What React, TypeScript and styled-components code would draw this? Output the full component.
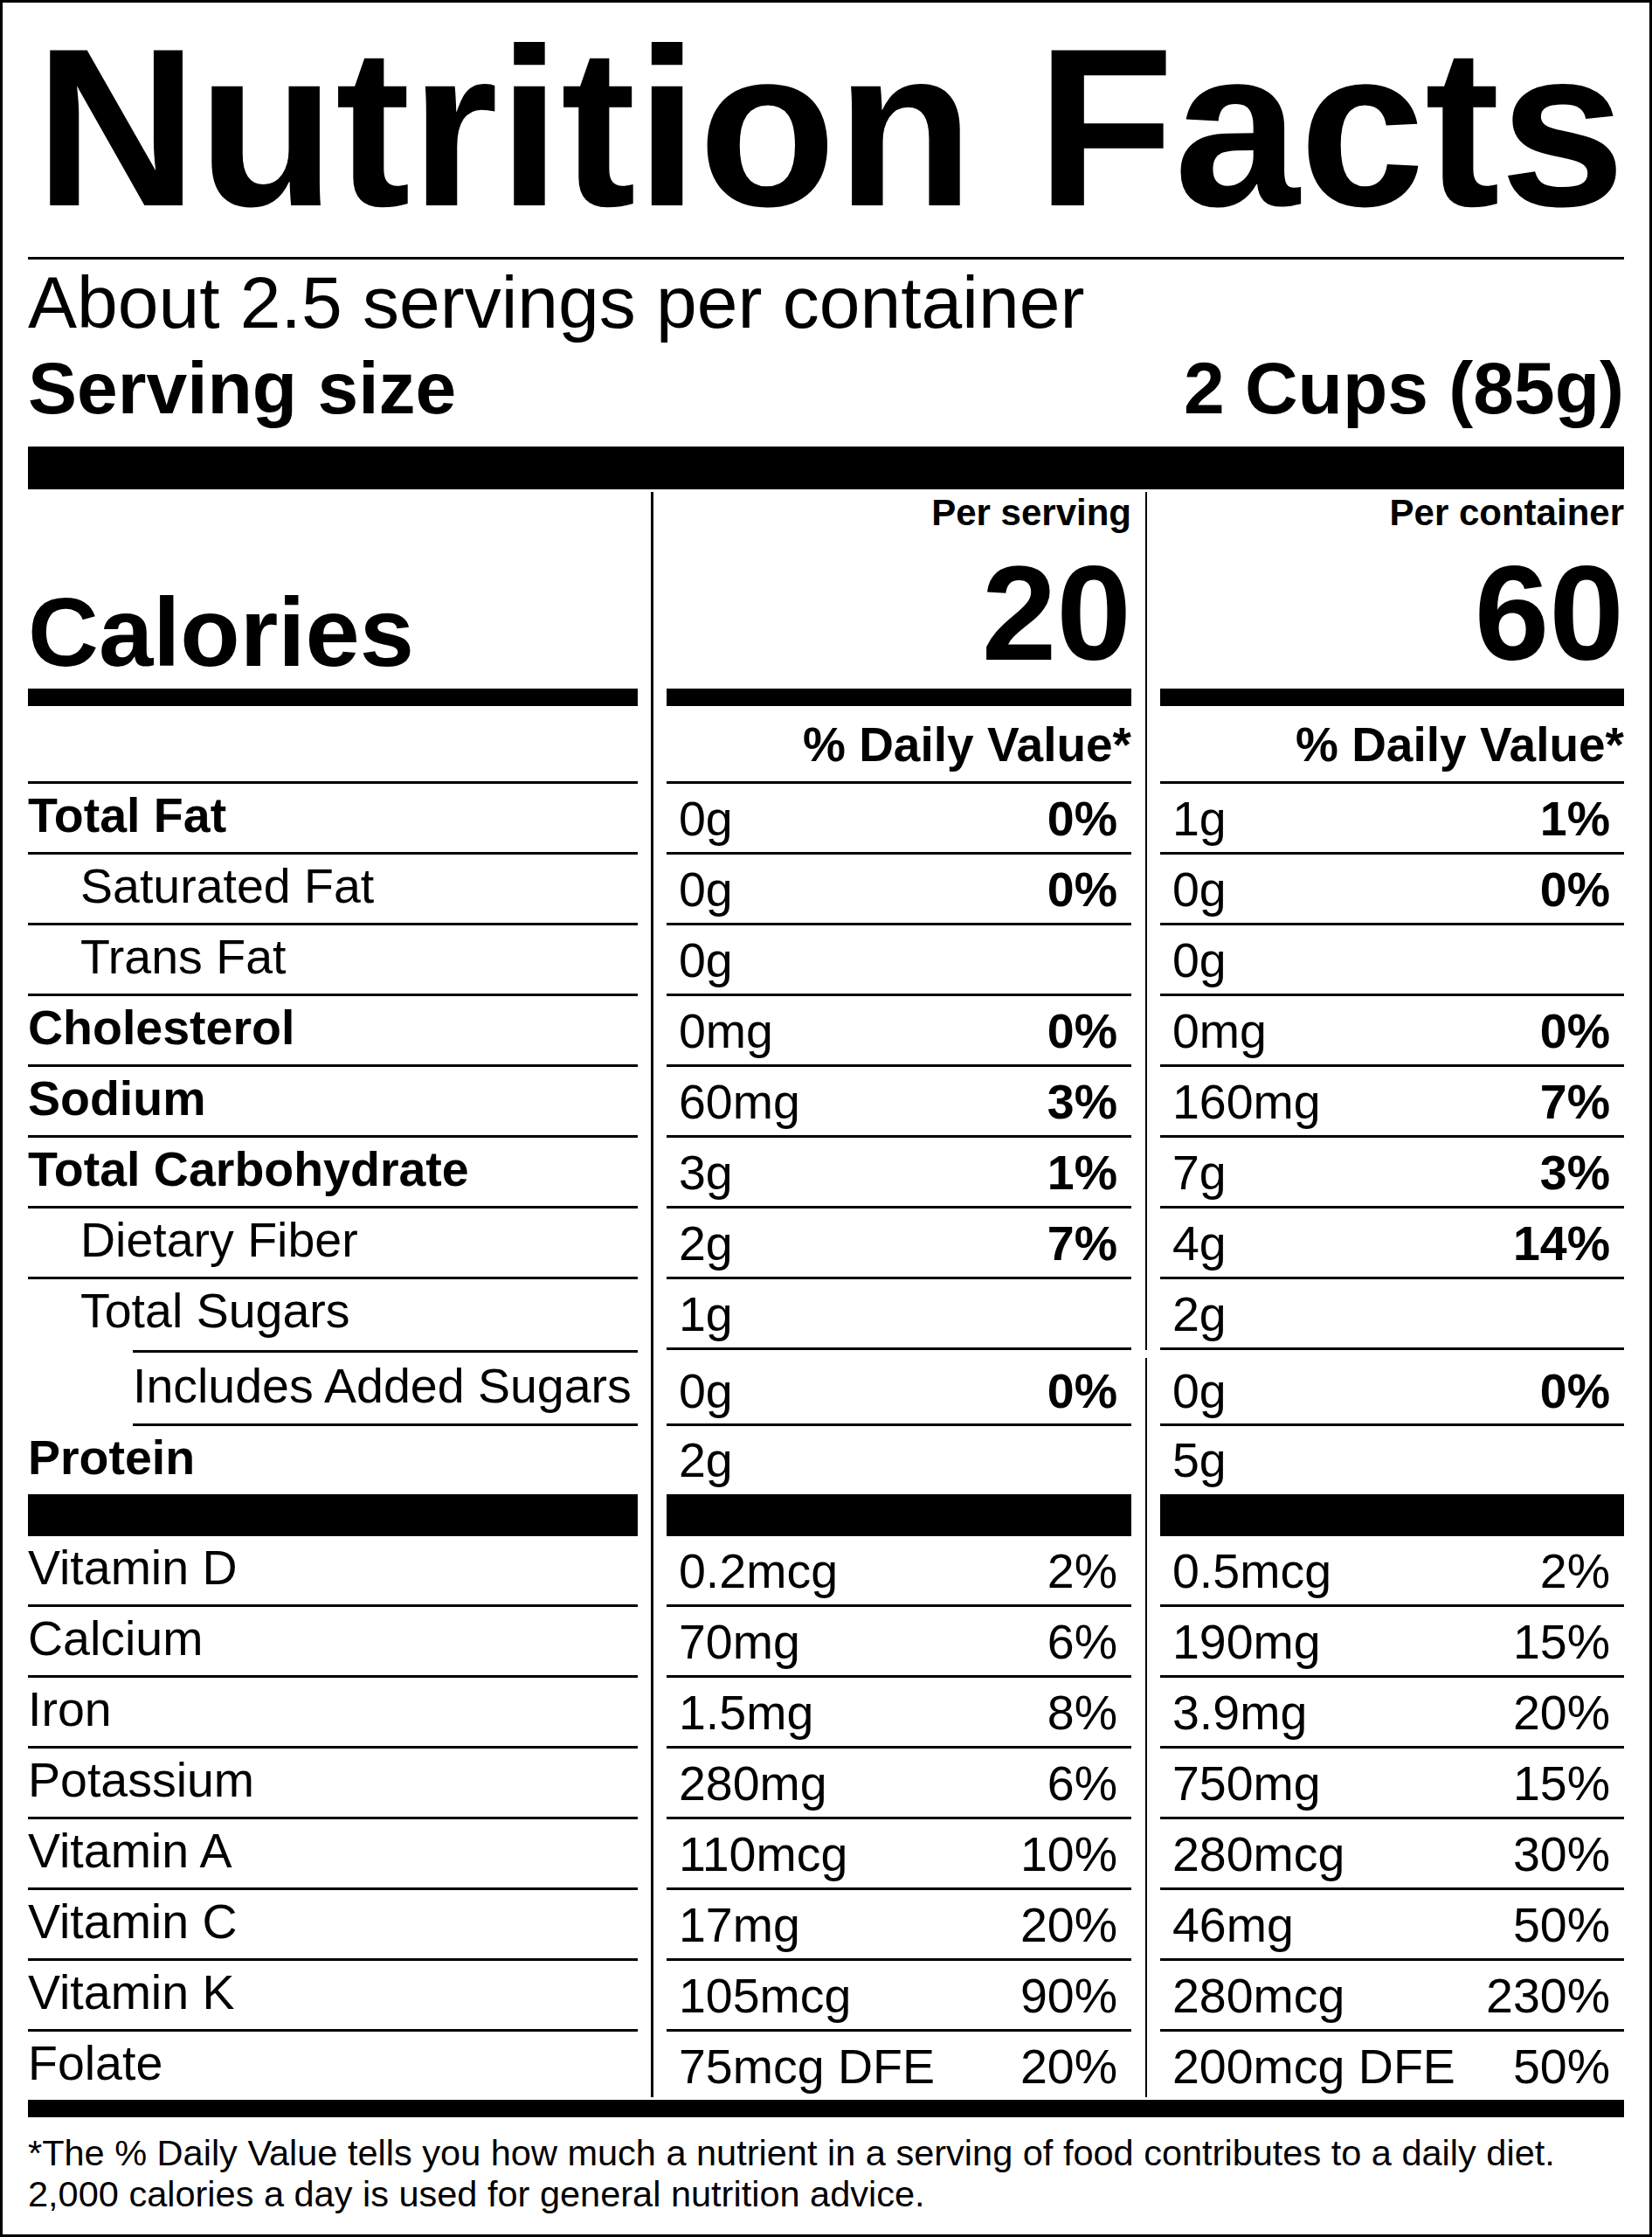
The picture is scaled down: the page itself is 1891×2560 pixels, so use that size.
import React from "react";
import styled, { createGlobalStyle } from "styled-components";

const GlobalStyle = createGlobalStyle`
  html, body { margin: 0; padding: 0; background: #fff; }
  body { font-family: "Liberation Sans", Arial, Helvetica, sans-serif; color: #000; }
  *, *::before, *::after { box-sizing: border-box; }
`;

const Label = styled.div`
  width: 1891px;
  height: 2560px;
  border: 3px solid #000;
  padding: 29px 29px 0;
  overflow: hidden;
  background: #fff;
  font-family: "Liberation Sans", Arial, Helvetica, sans-serif;
  color: #000;
`;

const Title = styled.h1`
  margin: 0 0 34px;
  padding-left: 8px;
  font-size: 258px;
  line-height: 228px;
  font-weight: 700;
  white-space: nowrap;
`;

const Rule = styled.div<{ $h: number; $mt?: number }>`
  height: ${(p) => p.$h}px;
  margin-top: ${(p) => p.$mt ?? 0}px;
  background: #000;
`;

const ServingLine = styled.div<{ $bold?: boolean }>`
  display: flex;
  justify-content: space-between;
  font-size: 84px;
  line-height: 98px;
  font-weight: ${(p) => (p.$bold ? 700 : 400)};
  white-space: nowrap;
`;

const Row = styled.div<{ $h: number }>`
  display: grid;
  grid-template-columns: 698px 33px 532px 33px 531px;
  grid-template-rows: ${(p) => p.$h}px;
`;

const Divider = styled.div<{ $w: number; $top?: number; $bottom?: number }>`
  justify-self: center;
  width: ${(p) => p.$w}px;
  margin-top: ${(p) => p.$top ?? 0}px;
  margin-bottom: ${(p) => p.$bottom ?? 0}px;
  background: #000;
`;

const Cell = styled.div<{ $rule: number }>`
  border-bottom: ${(p) => p.$rule}px solid #000;
  min-width: 0;
`;

const CaloriesCell = styled(Cell)`
  display: flex;
  align-items: flex-end;
  padding-bottom: 8px;
  font-size: 112px;
  line-height: 112px;
  font-weight: 700;
`;

const AmountHeadCell = styled(Cell)`
  display: flex;
  flex-direction: column;
  align-items: flex-end;
  justify-content: space-between;
  padding: 6px 0 9px;
  font-weight: 700;
`;

const PerLabel = styled.div`
  font-size: 42px;
  line-height: 42px;
  white-space: nowrap;
`;

const BigNumber = styled.div`
  font-size: 154px;
  line-height: 154px;
`;

const DvCell = styled(Cell)`
  display: flex;
  align-items: flex-end;
  justify-content: flex-end;
  padding-bottom: 14px;
  font-size: 55px;
  line-height: 55px;
  font-weight: 700;
  white-space: nowrap;
`;

const NameCell = styled(Cell)<{
  $indent: number;
  $bold?: boolean;
  $pt: number;
  $inset?: number;
  $ruleTop?: number;
}>`
  margin-left: ${(p) => p.$inset ?? 0}px;
  border-top: ${(p) => p.$ruleTop ?? 0}px solid #000;
  padding: ${(p) => p.$pt}px 0 0 ${(p) => p.$indent}px;
  font-size: 55.5px;
  line-height: 55px;
  font-weight: ${(p) => (p.$bold ? 700 : 400)};
  white-space: nowrap;
`;

const ValueCell = styled(Cell)<{ $pt: number }>`
  display: flex;
  justify-content: space-between;
  align-items: flex-start;
  padding: ${(p) => p.$pt}px 16px 0 14px;
  font-size: 55.5px;
  line-height: 55px;
  white-space: nowrap;
`;

const Pct = styled.span<{ $bold?: boolean }>`
  font-weight: ${(p) => (p.$bold ? 700 : 400)};
`;

const Footnote = styled.p`
  margin: 17px 0 0;
  font-size: 41.5px;
  line-height: 47px;
  white-space: nowrap;
`;

type Nutrient = {
  name: string;
  level: 0 | 1 | 2;
  bold?: boolean;
  serving: [string, string?];
  container: [string, string?];
};

const main: Nutrient[] = [
  { name: "Total Fat", level: 0, bold: true, serving: ["0g", "0%"], container: ["1g", "1%"] },
  { name: "Saturated Fat", level: 1, serving: ["0g", "0%"], container: ["0g", "0%"] },
  { name: "Trans Fat", level: 1, serving: ["0g"], container: ["0g"] },
  { name: "Cholesterol", level: 0, bold: true, serving: ["0mg", "0%"], container: ["0mg", "0%"] },
  { name: "Sodium", level: 0, bold: true, serving: ["60mg", "3%"], container: ["160mg", "7%"] },
  { name: "Total Carbohydrate", level: 0, bold: true, serving: ["3g", "1%"], container: ["7g", "3%"] },
  { name: "Dietary Fiber", level: 1, serving: ["2g", "7%"], container: ["4g", "14%"] },
  { name: "Total Sugars", level: 1, serving: ["1g"], container: ["2g"] },
];

const vitamins: { name: string; serving: [string, string]; container: [string, string] }[] = [
  { name: "Vitamin D", serving: ["0.2mcg", "2%"], container: ["0.5mcg", "2%"] },
  { name: "Calcium", serving: ["70mg", "6%"], container: ["190mg", "15%"] },
  { name: "Iron", serving: ["1.5mg", "8%"], container: ["3.9mg", "20%"] },
  { name: "Potassium", serving: ["280mg", "6%"], container: ["750mg", "15%"] },
  { name: "Vitamin A", serving: ["110mcg", "10%"], container: ["280mcg", "30%"] },
  { name: "Vitamin C", serving: ["17mg", "20%"], container: ["46mg", "50%"] },
  { name: "Vitamin K", serving: ["105mcg", "90%"], container: ["280mcg", "230%"] },
  { name: "Folate", serving: ["75mcg DFE", "20%"], container: ["200mcg DFE", "50%"] },
];

export default function App() {
  return (
    <>
      <GlobalStyle />
      <Label>
        <Title>Nutrition Facts</Title>
        <Rule $h={3} />
        <ServingLine>
          <span>About 2.5 servings per container</span>
        </ServingLine>
        <ServingLine $bold>
          <span>Serving size</span>
          <span>2 Cups (85g)</span>
        </ServingLine>
        <Rule $h={49} $mt={18} />

        <Row $h={248}>
          <CaloriesCell $rule={20}>Calories</CaloriesCell>
          <Divider $w={3} $top={3} />
          <AmountHeadCell $rule={20}>
            <PerLabel>Per serving</PerLabel>
            <BigNumber>20</BigNumber>
          </AmountHeadCell>
          <Divider $w={2} $top={3} />
          <AmountHeadCell $rule={20}>
            <PerLabel>Per container</PerLabel>
            <BigNumber>60</BigNumber>
          </AmountHeadCell>
        </Row>

        <Row $h={89}>
          <Cell $rule={3} />
          <Divider $w={3} />
          <DvCell $rule={3}>% Daily Value*</DvCell>
          <Divider $w={2} />
          <DvCell $rule={3}>% Daily Value*</DvCell>
        </Row>

        {main.map((n) => {
          const isSugars = n.name === "Total Sugars";
          return (
            <Row $h={81} key={n.name}>
              <NameCell
                $rule={isSugars ? 0 : 3}
                $indent={n.level * 60}
                $bold={n.bold}
                $pt={9}
              >
                {n.name}
              </NameCell>
              <Divider $w={3} />
              <ValueCell $rule={3} $pt={13}>
                <span>{n.serving[0]}</span>
                {n.serving[1] && <Pct $bold>{n.serving[1]}</Pct>}
              </ValueCell>
              <Divider $w={2} />
              <ValueCell $rule={3} $pt={13}>
                <span>{n.container[0]}</span>
                {n.container[1] && <Pct $bold>{n.container[1]}</Pct>}
              </ValueCell>
            </Row>
          );
        })}

        <Row $h={87}>
          <NameCell $rule={3} $ruleTop={3} $inset={120} $indent={0} $pt={11}>
            Includes Added Sugars
          </NameCell>
          <Divider $w={3} />
          <ValueCell $rule={3} $pt={20}>
            <span>0g</span>
            <Pct $bold>0%</Pct>
          </ValueCell>
          <Divider $w={2} $top={9} />
          <ValueCell $rule={3} $pt={20}>
            <span>0g</span>
            <Pct $bold>0%</Pct>
          </ValueCell>
        </Row>

        <Row $h={126}>
          <NameCell $rule={48} $indent={0} $bold $pt={9}>
            Protein
          </NameCell>
          <Divider $w={3} />
          <ValueCell $rule={48} $pt={12}>
            <span>2g</span>
          </ValueCell>
          <Divider $w={2} />
          <ValueCell $rule={48} $pt={12}>
            <span>5g</span>
          </ValueCell>
        </Row>

        {vitamins.map((v, i) => {
          const last = i === vitamins.length - 1;
          const rule = last ? 0 : 3;
          return (
            <Row $h={last ? 78 : 81} key={v.name}>
              <NameCell $rule={rule} $indent={0} $pt={9}>
                {v.name}
              </NameCell>
              <Divider $w={3} $bottom={last ? 3 : 0} />
              <ValueCell $rule={rule} $pt={13}>
                <span>{v.serving[0]}</span>
                <Pct>{v.serving[1]}</Pct>
              </ValueCell>
              <Divider $w={2} $bottom={last ? 3 : 0} />
              <ValueCell $rule={rule} $pt={13}>
                <span>{v.container[0]}</span>
                <Pct>{v.container[1]}</Pct>
              </ValueCell>
            </Row>
          );
        })}

        <Rule $h={20} />
        <Footnote>
          *The % Daily Value tells you how much a nutrient in a serving of food contributes to a daily diet.
          <br />
          2,000 calories a day is used for general nutrition advice.
        </Footnote>
      </Label>
    </>
  );
}
